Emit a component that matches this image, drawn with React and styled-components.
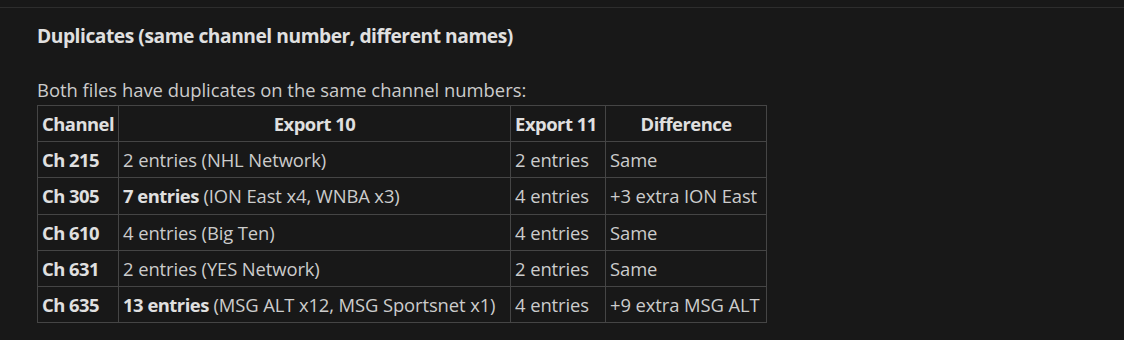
import React from 'react';
import styled, { createGlobalStyle } from 'styled-components';

const GlobalStyle = createGlobalStyle`
  body {
    margin: 0;
    background: #181818;
    color: #cccccc;
    font-family: "Open Sans", "Noto Sans", sans-serif;
  }
`;

const Page = styled.div`
  width: 1124px;
  height: 340px;
  overflow: hidden;
`;

const Rule = styled.div`
  height: 1px;
  margin-top: 7px;
  background: #2d2d2d;
`;

const Section = styled.section`
  padding: 0 37px;
`;

const Heading = styled.h3`
  margin: 13px 0 0;
  font-size: 19.2px;
  line-height: 30px;
  font-weight: 700;
  letter-spacing: -0.45px;
  color: #e0e0e0;
`;

const Para = styled.p`
  margin: 27px 0 3px;
  font-size: 18.4px;
  line-height: 24px;
`;

const Table = styled.table`
  border-collapse: collapse;
  table-layout: fixed;
  font-size: 18.4px;
  letter-spacing: -0.1px;
`;

const Th = styled.th`
  border: 1px solid #454545;
  height: 35.2px;
  padding: 0 4px;
  font-weight: 700;
  color: #e0e0e0;
  letter-spacing: -0.5px;
  text-align: ${(p) => (p.$left ? 'left' : 'center')};
  white-space: nowrap;
`;

const Td = styled.td`
  border: 1px solid #454545;
  height: 35.2px;
  padding: 0 4px;
  white-space: nowrap;
`;

const Strong = styled.b`
  font-weight: 700;
  letter-spacing: -0.5px;
  color: #e0e0e0;
`;

const widths = [81, 392, 95, 161];

const rows = [
  ['Ch 215', null, '2 entries (NHL Network)', '2 entries', 'Same'],
  ['Ch 305', '7 entries', ' (ION East x4, WNBA x3)', '4 entries', '+3 extra ION East'],
  ['Ch 610', null, '4 entries (Big Ten)', '4 entries', 'Same'],
  ['Ch 631', null, '2 entries (YES Network)', '2 entries', 'Same'],
  ['Ch 635', '13 entries', ' (MSG ALT x12, MSG Sportsnet x1)', '4 entries', '+9 extra MSG ALT'],
];

export default function App() {
  return (
    <Page>
      <GlobalStyle />
      <Rule />
      <Section>
        <Heading>Duplicates (same channel number, different names)</Heading>
        <Para>Both files have duplicates on the same channel numbers:</Para>
        <Table>
          <colgroup>
            {widths.map((w, i) => (
              <col key={i} style={{ width: w }} />
            ))}
          </colgroup>
          <thead>
            <tr>
              <Th $left>Channel</Th>
              <Th>Export 10</Th>
              <Th $left>Export 11</Th>
              <Th>Difference</Th>
            </tr>
          </thead>
          <tbody>
            {rows.map(([ch, bold, rest, e11, diff]) => (
              <tr key={ch}>
                <Td><Strong>{ch}</Strong></Td>
                <Td>{bold && <Strong>{bold}</Strong>}{rest}</Td>
                <Td>{e11}</Td>
                <Td>{diff}</Td>
              </tr>
            ))}
          </tbody>
        </Table>
      </Section>
    </Page>
  );
}
